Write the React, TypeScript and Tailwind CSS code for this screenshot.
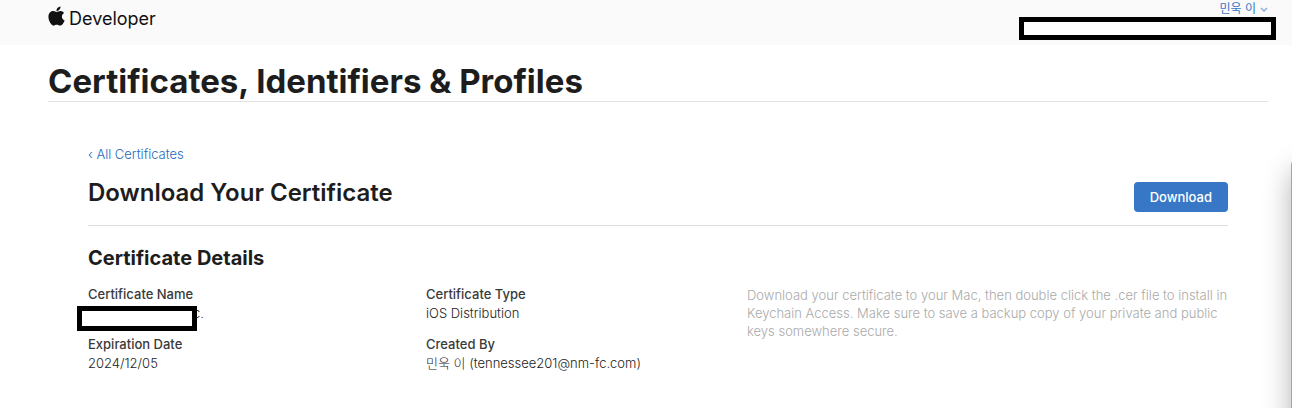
import React from 'react'
import { FaApple } from 'react-icons/fa'

interface DetailProps {
  label: string
  children: React.ReactNode
}

const Detail: React.FC<DetailProps> = ({ label, children }) => (
  <div className="relative">
    <dt className="font-medium">{label}</dt>
    <dd className="mt-px font-light text-[#222222]">{children}</dd>
  </div>
)

const Header: React.FC = () => (
  <header className="relative flex h-[45px] items-start justify-between bg-[#fafafa] pr-6 pl-12">
    <a href="#" className="flex items-start gap-1 pt-[5px] text-[#111]">
      <FaApple className="h-[22px] w-[17px]" aria-hidden="true" />
      <span className="pt-[2px] text-lg leading-6">Developer</span>
    </a>
    <button type="button" className="flex items-center gap-1 pt-px text-xs leading-4 text-[#3777c6]">
      민욱 이
      <svg viewBox="0 0 8 5" className="h-[5px] w-2 opacity-60" fill="none" stroke="currentColor" strokeWidth="1.3" aria-hidden="true">
        <path d="M1 1l3 3 3-3" />
      </svg>
    </button>
    {/* Redacted team name */}
    <div className="absolute top-[17px] right-4 h-[23px] w-[257px] border-5 border-black bg-white" />
  </header>
)

const App: React.FC = () => {
  return (
    <div className="relative min-h-screen overflow-hidden bg-white font-['Inter','Noto_Sans_CJK_KR',sans-serif] text-[13px] leading-[18px] text-[#3a3a3a]">
      <Header />

      <main className="pr-6 pl-12">
        <h1 className="border-b border-[#e3e3e3] pt-4 text-[33px] leading-10 font-bold text-[#1d1d1d]">
          Certificates, Identifiers &amp; Profiles
        </h1>

        <div className="px-10 pt-[43px]">
          <a href="#" className="font-light text-[#2569bd]">
            ‹ All Certificates
          </a>

          <div className="mt-[15px] flex items-start justify-between border-b border-[#dcdcdc] pb-[13px]">
            <h2 className="text-2xl leading-[30px] font-semibold text-[#1d1d1d]">Download Your Certificate</h2>
            <button
              type="button"
              className="mt-1 h-[30px] rounded bg-[#3777c6] px-4 font-medium text-white"
            >
              Download
            </button>
          </div>

          <h3 className="mt-5 text-xl leading-6 font-bold text-[#1d1d1d]">Certificate Details</h3>

          <div className="mt-[15px] grid grid-cols-[338fr_321fr_481fr]">
            <dl className="space-y-[13px]">
              <Detail label="Certificate Name">
                <span className="pl-[94px]">Inc.</span>
                {/* Redacted name */}
                <span className="absolute top-[21px] -left-[11px] h-[25px] w-[120px] border-5 border-black bg-white" />
              </Detail>
              <Detail label="Expiration Date">2024/12/05</Detail>
            </dl>
            <dl className="space-y-[13px]">
              <Detail label="Certificate Type">iOS Distribution</Detail>
              <Detail label="Created By">민욱 이 (tennessee201@nm-fc.com)</Detail>
            </dl>
            <p className="pt-px font-light text-[#aaaaaa]">
              Download your certificate to your Mac, then double click the .cer file to install in Keychain Access. Make
              sure to save a backup copy of your private and public keys somewhere secure.
            </p>
          </div>
        </div>
      </main>

      {/* Shadow of the neighbouring window */}
      <div className="absolute top-[156px] -right-[39px] -bottom-20 w-10 rounded-[10px] bg-[#a5a5a5] shadow-[0_14px_28px_rgba(0,0,0,0.3)]" />
    </div>
  )
}

export default App
